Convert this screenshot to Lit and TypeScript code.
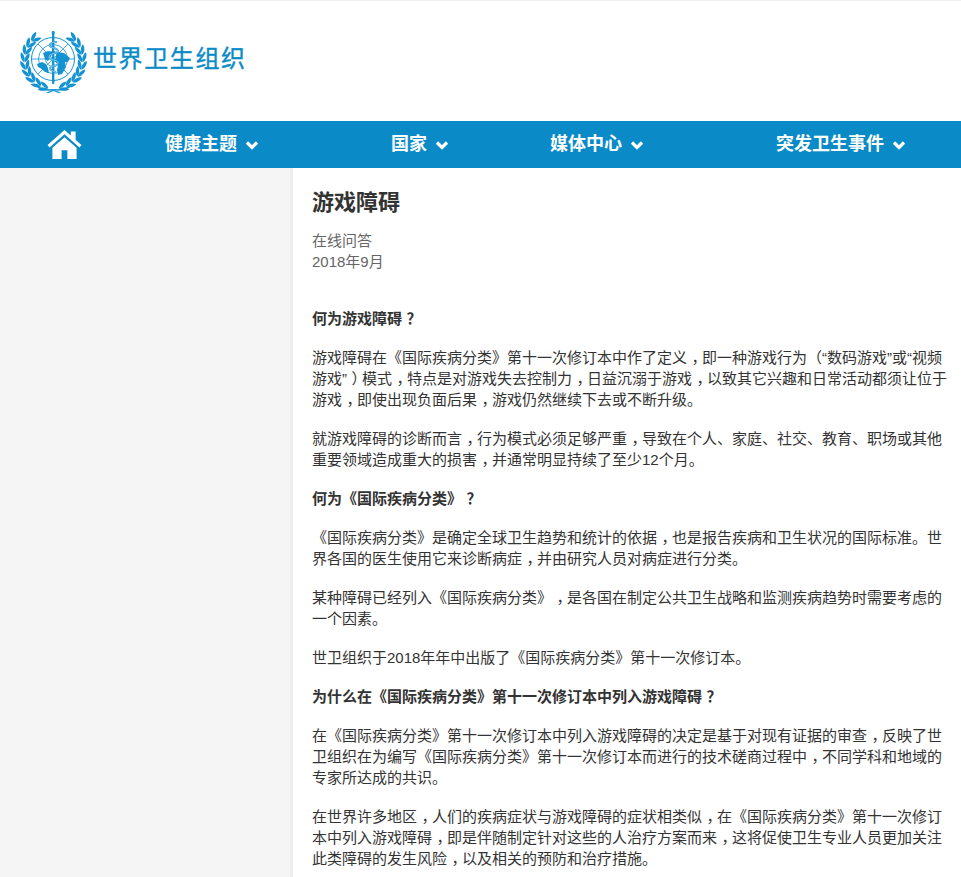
import { LitElement, html, css, svg } from "lit";
import { customElement } from "lit/decorators.js";

const blue = css`#0a8bc8`;
const EMBLEM = "#1493d2";

// laurel leaves placed along an arc round the globe, theta measured up from the bottom
const leafAngles = [20, 35, 50, 65, 80, 95, 110, 125, 140];
const leaf = "M0 -5.200C2.300 -2.500 2.300 2.500 0 5.200C-2.300 2.500 -2.300 -2.500 0 -5.200Z";

function wreathRow(radius: number, tilt: number) {
  return leafAngles.map((deg) => {
    const t = (deg * Math.PI) / 180;
    const x = 34 - radius * Math.sin(t);
    const y = 29 + radius * Math.cos(t);
    return svg`<path d=${leaf} transform="translate(${x} ${y}) rotate(${deg - 90 + tilt})"/>`;
  });
}

const emblem = svg`
  <g fill="none" stroke=${EMBLEM} stroke-width=".8">
    <circle cx="33" cy="28" r="21.500" stroke-width="1"/>
    <circle cx="33" cy="28" r="14.500"/>
    <circle cx="33" cy="28" r="7.500"/>
    <path d="M11.500 28H54.500M33 6.500V49.500M17.800 12.800L48.200 43.200M48.200 12.800L17.800 43.200"/>
  </g>
  <g fill=${EMBLEM}>
    <path d="M17 33l5-2 4 2 2 4 1 5-4-1-3-3-4-2z"/>
    <path d="M23 22l5-2 5 1-2 4-3 5-3-2z"/>
    <path d="M37 21l7 1 6 5-2 4-3 0 1 5-4 7-4 1-1-5 1-5-3-4 1-6z"/>
    <rect x="32" y="0" width="2.400" height="53" rx="1"/>
    <circle cx="33.200" cy="1.500" r="1.500"/>
  </g>
  <path d="M37 11c-5 0-8 2-7 4s8 2 8 5-9 2-9 6 9 2 9 6-8 2-8 5 4 3 6 4" fill="none" stroke=${EMBLEM} stroke-width="1.800"/>
  <path d="M37 11c-5 0-8 2-7 4s8 2 8 5-9 2-9 6 9 2 9 6-8 2-8 5 4 3 6 4" fill="none" stroke="#fff" stroke-width=".5"/>
  ${[false, true].map(
    (flip) => svg`
      <g fill=${EMBLEM} transform=${flip ? "translate(67.500 0) scale(-1 1)" : "translate(-.5 0)"}>
        ${wreathRow(31, -22)}
        ${wreathRow(26.500, 22)}
        <path d="M18 55c5 2.500 10 3.500 15 3l2 1c-6 1.500-13 .5-18-3z"/>
        <path d="M26 62l8-3.500 1 1-7 3z"/>
      </g>
    `
  )}
`;

interface Block {
  kind: "q" | "p";
  text: string;
}

const blocks: Block[] = [
  { kind: "q", text: "何为游戏障碍？" },
  { kind: "p", text: "游戏障碍在《国际疾病分类》第十一次修订本中作了定义，即一种游戏行为（“数码游戏”或“视频游戏”）模式，特点是对游戏失去控制力，日益沉溺于游戏，以致其它兴趣和日常活动都须让位于游戏，即使出现负面后果，游戏仍然继续下去或不断升级。" },
  { kind: "p", text: "就游戏障碍的诊断而言，行为模式必须足够严重，导致在个人、家庭、社交、教育、职场或其他重要领域造成重大的损害，并通常明显持续了至少12个月。" },
  { kind: "q", text: "何为《国际疾病分类》？" },
  { kind: "p", text: "《国际疾病分类》是确定全球卫生趋势和统计的依据，也是报告疾病和卫生状况的国际标准。世界各国的医生使用它来诊断病症，并由研究人员对病症进行分类。" },
  { kind: "p", text: "某种障碍已经列入《国际疾病分类》，是各国在制定公共卫生战略和监测疾病趋势时需要考虑的一个因素。" },
  { kind: "p", text: "世卫组织于2018年年中出版了《国际疾病分类》第十一次修订本。" },
  { kind: "q", text: "为什么在《国际疾病分类》第十一次修订本中列入游戏障碍？" },
  { kind: "p", text: "在《国际疾病分类》第十一次修订本中列入游戏障碍的决定是基于对现有证据的审查，反映了世卫组织在为编写《国际疾病分类》第十一次修订本而进行的技术磋商过程中，不同学科和地域的专家所达成的共识。" },
  { kind: "p", text: "在世界许多地区，人们的疾病症状与游戏障碍的症状相类似，在《国际疾病分类》第十一次修订本中列入游戏障碍，即是伴随制定针对这些的人治疗方案而来，这将促使卫生专业人员更加关注此类障碍的发生风险，以及相关的预防和治疗措施。" },
];

const navItems = ["健康主题", "国家", "媒体中心", "突发卫生事件"];

// the reference font centres fullwidth punctuation in its box, Noto pushes it to the left
function punctuated(text: string) {
  return text
    .split(/([，？）])/)
    .map((part) => (part === "，" || part === "？" || part === "）" ? html`<span class="punct">${part}</span>` : part));
}

@customElement("app-root")
export class AppRoot extends LitElement {
  static styles = css`
    :host {
      display: block;
      height: 877px;
      overflow: hidden;
      background: #fff;
      font-family: "Liberation Sans", "Noto Sans CJK SC", sans-serif;
      font-size: 15px;
      line-height: 21px;
      color: #333;
      text-spacing-trim: space-all;
    }

    .masthead {
      height: 121px;
      box-sizing: border-box;
      border-top: 1px solid #eee;
      display: flex;
      align-items: center;
      gap: 5px;
      padding: 2px 0 0 20px;
    }

    .emblem {
      width: 68px;
      height: 62px;
    }

    .wordmark {
      font-size: 24px;
      line-height: 30px;
      color: ${blue};
      letter-spacing: 1.6px;
      -webkit-text-stroke: 0.35px ${blue};
      white-space: nowrap;
      margin-bottom: 7px;
    }

    nav {
      height: 47px;
      background: ${blue};
      display: grid;
      grid-template-columns: 165px 226px 159px 226px 1fr;
      align-items: center;
      color: #fff;
      font-size: 18px;
      font-weight: 700;
    }

    .home {
      padding-left: 47px;
      display: flex;
    }

    .home svg {
      width: 35px;
      height: 29px;
    }

    .nav-item {
      display: flex;
      align-items: center;
      gap: 8px;
      white-space: nowrap;
    }

    .chevron {
      width: 14px;
      height: 10px;
    }

    .page {
      display: flex;
      height: 709px;
    }

    aside {
      width: 290px;
      flex: none;
      background: #f5f5f5;
      border-right: 3px solid #eee;
    }

    main {
      flex: 1;
      min-width: 0;
      padding: 0 10px 0 19px;
    }

    h1 {
      margin: 20px 0 12px;
      font-size: 22px;
      line-height: 30px;
      font-weight: 700;
    }

    .meta {
      color: #666;
      margin-bottom: 36px;
    }

    p {
      margin: 0 0 18px;
    }

    .q {
      font-weight: 700;
    }

    .punct {
      padding-left: 0.3em;
      letter-spacing: -0.3em;
    }
  `;

  render() {
    return html`
      <header class="masthead">
        <svg class="emblem" viewBox="0 0 68 62">${emblem}</svg>
        <span class="wordmark">世界卫生组织</span>
      </header>
      <nav>
        <div class="home">
          <svg viewBox="0 0 35 30" fill="#fff">
            <path d="M17.500 0L0 15.500l2 2.500L17.500 4.500 33 18l2-2.500-6-5.300V1.500h-5v4.300z" />
            <path d="M17.500 7.500L5 18.300V30h9.500v-9h6v9H30V18.300z" />
          </svg>
        </div>
        ${navItems.map(
          (label) => html`
            <div class="nav-item">
              <span>${label}</span>
              <svg class="chevron" viewBox="0 0 14 10">
                <path d="M2 2.500l5 5 5-5" fill="none" stroke="#fff" stroke-width="3.200" />
              </svg>
            </div>
          `
        )}
      </nav>
      <div class="page">
        <aside></aside>
        <main>
          <h1>游戏障碍</h1>
          <div class="meta">在线问答<br />2018年9月</div>
          ${blocks.map((b) => html`<p class=${b.kind}>${punctuated(b.text)}</p>`)}
        </main>
      </div>
    `;
  }
}
